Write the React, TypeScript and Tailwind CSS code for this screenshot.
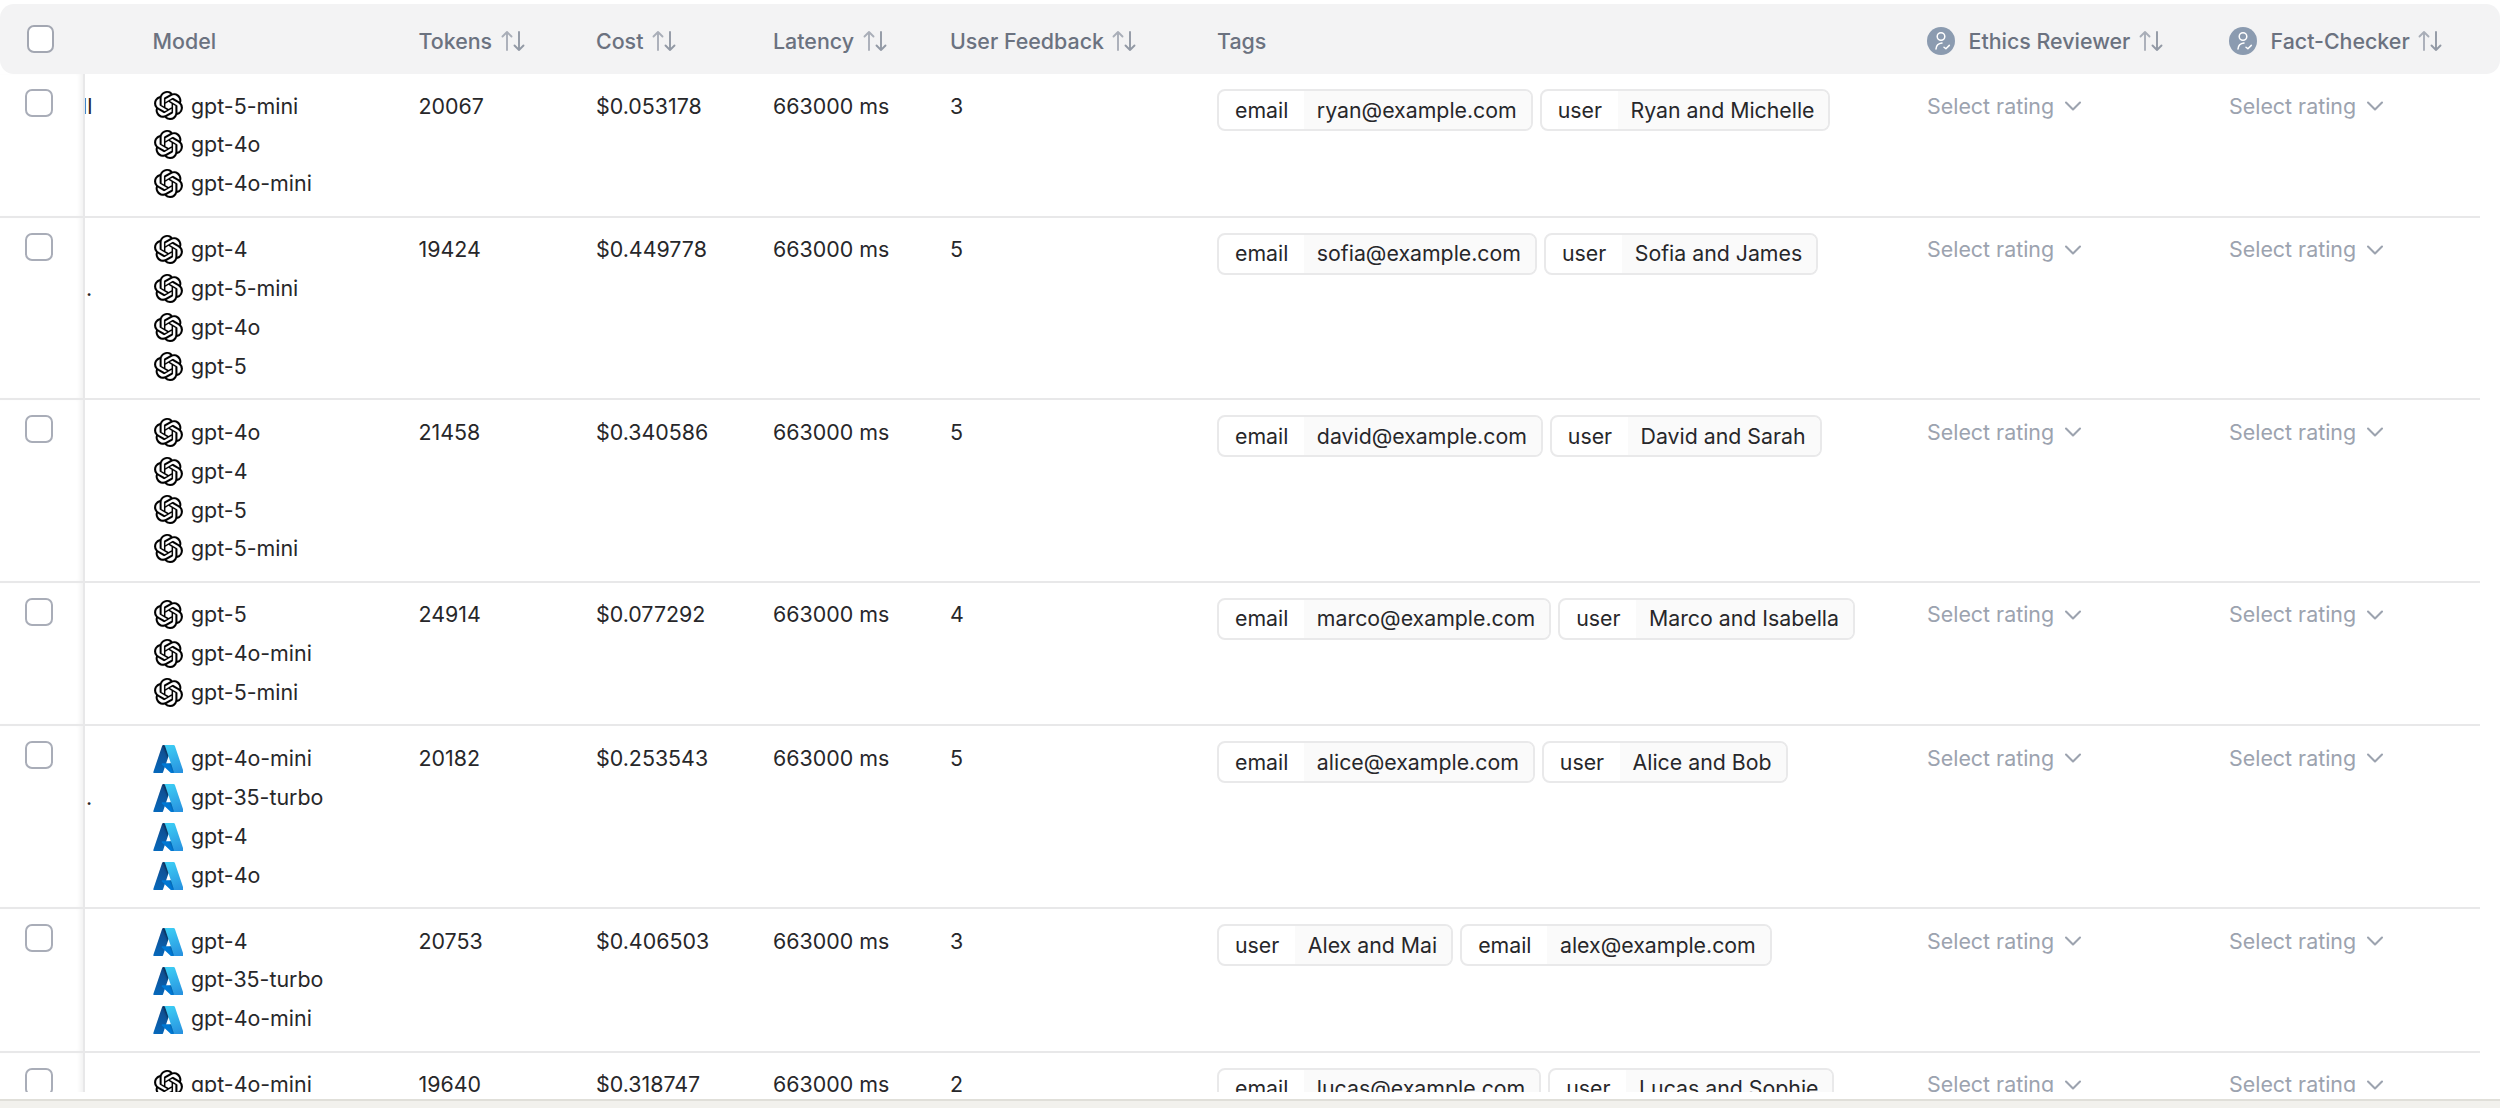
import React from "react";
import { ChevronDown } from "lucide-react";
import { SiOpenai } from "react-icons/si";

type Tag = [string, string];
type Row = {
  stub: string;
  provider: "openai" | "azure";
  models: string[];
  tokens: string;
  cost: string;
  feedback: string;
  tags: Tag[];
};

const rows: Row[] = [
  { stub: "ll", provider: "openai", models: ["gpt-5-mini", "gpt-4o", "gpt-4o-mini"], tokens: "20067", cost: "$0.053178", feedback: "3", tags: [["email", "ryan@example.com"], ["user", "Ryan and Michelle"]] },
  { stub: ".", provider: "openai", models: ["gpt-4", "gpt-5-mini", "gpt-4o", "gpt-5"], tokens: "19424", cost: "$0.449778", feedback: "5", tags: [["email", "sofia@example.com"], ["user", "Sofia and James"]] },
  { stub: "", provider: "openai", models: ["gpt-4o", "gpt-4", "gpt-5", "gpt-5-mini"], tokens: "21458", cost: "$0.340586", feedback: "5", tags: [["email", "david@example.com"], ["user", "David and Sarah"]] },
  { stub: "", provider: "openai", models: ["gpt-5", "gpt-4o-mini", "gpt-5-mini"], tokens: "24914", cost: "$0.077292", feedback: "4", tags: [["email", "marco@example.com"], ["user", "Marco and Isabella"]] },
  { stub: ".", provider: "azure", models: ["gpt-4o-mini", "gpt-35-turbo", "gpt-4", "gpt-4o"], tokens: "20182", cost: "$0.253543", feedback: "5", tags: [["email", "alice@example.com"], ["user", "Alice and Bob"]] },
  { stub: "", provider: "azure", models: ["gpt-4", "gpt-35-turbo", "gpt-4o-mini"], tokens: "20753", cost: "$0.406503", feedback: "3", tags: [["user", "Alex and Mai"], ["email", "alex@example.com"]] },
  { stub: "", provider: "openai", models: ["gpt-4o-mini"], tokens: "19640", cost: "$0.318747", feedback: "2", tags: [["email", "lucas@example.com"], ["user", "Lucas and Sophie"]] },
];

function SortIcon() {
  return (
    <svg width="24" height="22" viewBox="0 0 24 22" fill="none" strokeWidth="1.9" strokeLinecap="round" strokeLinejoin="round" className="shrink-0">
      <path d="M6 20V2M1.5 6.5 6 2l4.5 4.5" stroke="#a9aeb8" />
      <path d="M18 2v18M13.5 15.5 18 20l4.5-4.5" stroke="#9299a5" />
    </svg>
  );
}

function AzureIcon() {
  return (
    <svg width="30" height="30" viewBox="0 0 96 96" className="shrink-0">
      <defs>
        <linearGradient id="az-a" x1="45.6" y1="13" x2="16" y2="100" gradientUnits="userSpaceOnUse">
          <stop offset="0" stopColor="#114a8b" />
          <stop offset="1" stopColor="#0669bc" />
        </linearGradient>
        <linearGradient id="az-b" x1="52" y1="55" x2="45" y2="58" gradientUnits="userSpaceOnUse">
          <stop offset="0" stopOpacity=".3" />
          <stop offset=".07" stopOpacity=".2" />
          <stop offset=".32" stopOpacity=".1" />
          <stop offset=".62" stopOpacity=".05" />
          <stop offset="1" stopOpacity="0" />
        </linearGradient>
        <linearGradient id="az-c" x1="48.5" y1="11" x2="81" y2="97" gradientUnits="userSpaceOnUse">
          <stop offset="0" stopColor="#3ccbf4" />
          <stop offset="1" stopColor="#2892df" />
        </linearGradient>
      </defs>
      <path fill="url(#az-a)" d="M33.34 6.54h28.41L32.26 93.91a4.53 4.53 0 0 1-4.29 3.08H5.86a4.52 4.52 0 0 1-4.28-5.97L29.05 9.62a4.53 4.53 0 0 1 4.29-3.08z" />
      <path fill="#0078d4" d="M74.62 65.1H29.57a2.09 2.09 0 0 0-1.43 3.61l28.96 27.02a4.55 4.55 0 0 0 3.1 1.22h25.5z" />
      <path fill="url(#az-b)" d="M33.34 6.54a4.49 4.49 0 0 0-4.3 3.14L1.62 90.96a4.51 4.51 0 0 0 4.26 6.03h22.68a4.84 4.84 0 0 0 3.72-3.16l5.47-16.12 19.54 18.22a4.62 4.62 0 0 0 2.91 1.06h25.41L74.48 65.1l-32.5.01L61.87 6.54z" />
      <path fill="url(#az-c)" d="M70.13 9.62a4.52 4.52 0 0 0-4.28-3.08H34.18a4.52 4.52 0 0 1 4.28 3.08l27.47 81.4a4.52 4.52 0 0 1-4.28 5.98h31.67a4.52 4.52 0 0 0 4.28-5.98z" />
    </svg>
  );
}

function ReviewerIcon() {
  return (
    <svg width="28" height="28" viewBox="0 0 28 28" fill="none" className="shrink-0">
      <circle cx="14" cy="14" r="14" fill="#8b9bb0" />
      <circle cx="14" cy="9.5" r="3.8" stroke="#fff" strokeWidth="1.5" />
      <path d="M9 22c.2-3.3 2.4-5.6 6-6" stroke="#fff" strokeWidth="1.5" strokeLinecap="round" />
      <path d="M17 20.2l1.9 1.6 3.4-3.4" stroke="#fff" strokeWidth="1.5" strokeLinecap="round" strokeLinejoin="round" />
    </svg>
  );
}

function Checkbox({ header }: { header?: boolean }) {
  return <div className={header ? "w-[27px] h-[28px] rounded-[7px] border-2 border-[#a3a7b2] bg-white" : "w-[28px] h-[28px] rounded-[7px] border-2 border-[#a9adb8] bg-white"} />;
}

function TagPill({ k, v }: { k: string; v: string }) {
  return (
    <div className="flex h-[42px] items-stretch overflow-hidden rounded-[8px] border-2 border-[#e9e9ea] bg-white text-[21.3px] text-[#27272a]">
      <div className="flex items-center pl-[16px] pr-[15.5px]">{k}</div>
      <div className="flex items-center bg-[#fafafa] pl-[13px] pr-[14px]">{v}</div>
    </div>
  );
}

function SelectRating() {
  return (
    <div className="flex items-center h-[38.9px] gap-[5px] text-[#9ca3af]">
      <span>Select rating</span>
      <ChevronDown size={28} strokeWidth={1.8} />
    </div>
  );
}

function HeaderLabel({ label, icon }: { label: string; icon?: boolean }) {
  return (
    <div className="flex items-center gap-[8.5px]">
      {icon && <span className="mr-[5px] flex"><ReviewerIcon /></span>}
      <span>{label}</span>
      <SortIcon />
    </div>
  );
}

export default function App() {
  return (
    <div className="flex h-[1108px] w-[2500px] flex-col overflow-hidden bg-white text-[21.4px] leading-[38.9px] text-[#27272a] [font-family:Inter,sans-serif]">
      <div className="h-[4px] shrink-0" />
      <div className="flex h-[70px] w-[2500px] shrink-0 items-center rounded-[14px] bg-[#f3f3f4] font-medium text-[#6b7280]">
        <div className="w-[152.5px] shrink-0 pl-[27px]"><Checkbox header /></div>
        <div className="w-[266px] shrink-0 pt-[4px]">Model</div>
        <div className="w-[177.5px] shrink-0 pt-[4px]"><HeaderLabel label="Tokens" /></div>
        <div className="w-[177px] shrink-0 pt-[4px]"><HeaderLabel label="Cost" /></div>
        <div className="w-[177px] shrink-0 pt-[4px]"><HeaderLabel label="Latency" /></div>
        <div className="w-[267px] shrink-0 pt-[4px]"><HeaderLabel label="User Feedback" /></div>
        <div className="w-[710px] shrink-0 pt-[4px]">Tags</div>
        <div className="w-[302px] shrink-0 pt-[4px]"><HeaderLabel label="Ethics Reviewer" icon /></div>
        <div className="shrink-0 pt-[4px]"><HeaderLabel label="Fact-Checker" icon /></div>
      </div>
      <div className="h-[1018px] w-[2480px] shrink-0 overflow-hidden">
        {rows.map((r, i) => (
          <div key={i} className="flex border-b-2 border-[#e8e8e9]">
            <div className="w-[85px] shrink-0 border-r-2 border-[#e8e8e9] pl-[25px] pt-[15px] shadow-[inset_-5px_0_4px_-2px_rgba(0,0,0,0.05)]"><Checkbox /></div>
            <div className="w-[68px] shrink-0 overflow-hidden pt-[12.5px] leading-[38.9px]">
              {r.stub === "ll" ? <span className="-ml-[3px] inline-block">ll</span> : r.stub === "." ? <div className="mt-[38.9px] pl-[1px]">.</div> : null}
            </div>
            <div className="w-[265.5px] shrink-0 pb-[12.5px] pt-[12.5px]">
              {r.models.map((m, j) => (
                <div key={j} className="flex h-[38.9px] items-center gap-[8px]">
                  <span className="flex w-[30px] justify-center">
                    {r.provider === "openai" ? <SiOpenai size={29} color="#000" stroke="#000" strokeWidth={0.12} /> : <AzureIcon />}
                  </span>
                  <span>{m}</span>
                </div>
              ))}
            </div>
            <div className="w-[177.5px] shrink-0 pt-[12.5px]">{r.tokens}</div>
            <div className="w-[177px] shrink-0 pt-[12.5px]">{r.cost}</div>
            <div className="w-[177px] shrink-0 pt-[12.5px]">663000 ms</div>
            <div className="w-[267px] shrink-0 pt-[12.5px]">{r.feedback}</div>
            <div className="flex w-[710px] shrink-0 items-start gap-[7px] pt-[15px]">
              {r.tags.map(([k, v], j) => <TagPill key={j} k={k} v={v} />)}
            </div>
            <div className="w-[302px] shrink-0 pt-[12.5px]"><SelectRating /></div>
            <div className="shrink-0 pt-[12.5px]"><SelectRating /></div>
          </div>
        ))}
      </div>
      <div className="h-[7px] shrink-0" />
      <div className="h-[9px] shrink-0 border-t-2 border-[#e0dfd9] bg-[#f2f1ed]" />
    </div>
  );
}
